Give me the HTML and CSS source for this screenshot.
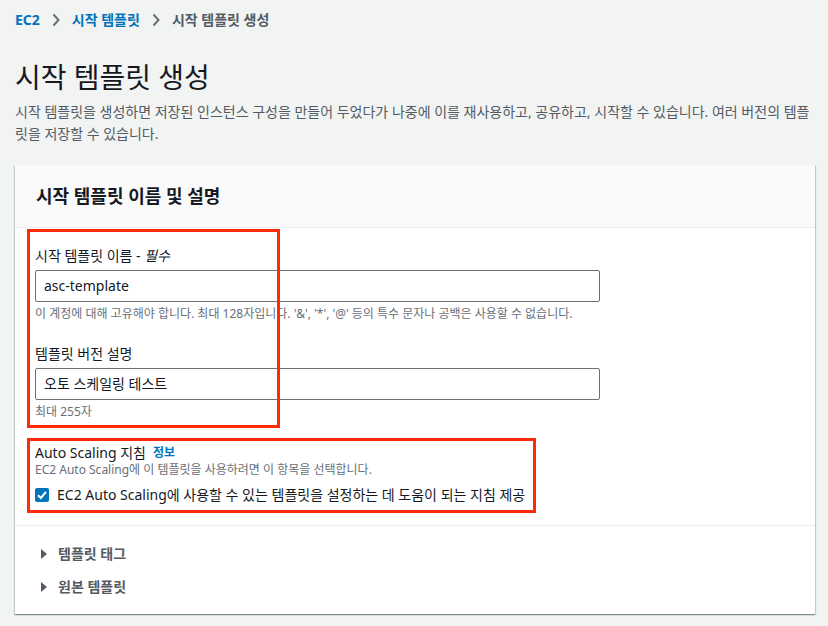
FILE: index.html
```html
<!DOCTYPE html>
<html lang="ko">
<head>
<meta charset="utf-8">
<link rel="stylesheet" href="styles.css">
</head>
<body>
<div class="page">
  <nav class="crumbs">
    <a class="crumb-link">EC2</a>
    <svg class="chev" width="8" height="14" viewBox="0 0 8 14"><path d="M1.5 1.5 L6.5 7 L1.5 12.5" fill="none" stroke="#687078" stroke-width="2"/></svg>
    <a class="crumb-link">시작 템플릿</a>
    <svg class="chev" width="8" height="14" viewBox="0 0 8 14"><path d="M1.5 1.5 L6.5 7 L1.5 12.5" fill="none" stroke="#687078" stroke-width="2"/></svg>
    <span class="crumb-current">시작 템플릿 생성</span>
  </nav>
  <h1 class="title">시작 템플릿 생성</h1>
  <p class="desc">시작 템플릿을 생성하면 저장된 인스턴스 구성을 만들어 두었다가 나중에 이를 재사용하고, 공유하고, 시작할 수 있습니다. 여러 버전의 템플릿을 저장할 수 있습니다.</p>

  <section class="card">
    <header class="card-head">시작 템플릿 이름 및 설명</header>
    <div class="card-body">
      <div class="field">
        <label class="label">시작 템플릿 이름 - <i>필수</i></label>
        <div class="input">asc-template</div>
        <div class="hint">이 계정에 대해 고유해야 합니다. 최대 128자입니다. '&amp;', '*', '@' 등의 특수 문자나 공백은 사용할 수 없습니다.</div>
      </div>
      <div class="field">
        <label class="label">템플릿 버전 설명</label>
        <div class="input">오토 스케일링 테스트</div>
        <div class="hint">최대 255자</div>
      </div>
      <div class="field asg">
        <div class="label-row"><span class="label">Auto Scaling 지침</span><a class="info">정보</a></div>
        <div class="hint small-desc">EC2 Auto Scaling에 이 템플릿을 사용하려면 이 항목을 선택합니다.</div>
        <div class="check-row">
          <span class="checkbox"><svg width="14" height="14" viewBox="0 0 14 14"><path d="M3 7.2 L5.8 10 L11 4" fill="none" stroke="#fff" stroke-width="2"/></svg></span>
          <span class="check-label">EC2 Auto Scaling에 사용할 수 있는 템플릿을 설정하는 데 도움이 되는 지침 제공</span>
        </div>
      </div>
      <div class="mark mark-1"></div>
      <div class="mark mark-2"></div>
    </div>
    <div class="card-foot">
      <div class="expander"><span class="tri"></span>템플릿 태그</div>
      <div class="expander"><span class="tri"></span>원본 템플릿</div>
    </div>
  </section>
</div>
</body>
</html>
```

FILE: styles.css
```css
* { box-sizing: border-box; }
html, body { margin: 0; padding: 0; }
body {
  background: #f2f3f3;
  font-family: "Noto Sans", "Noto Sans CJK KR", sans-serif;
  color: #16191f;
  width: 828px;
  height: 626px;
  overflow: hidden;
}
.page { padding: 10px 13px 0 15px; }
.crumbs {
  display: flex;
  align-items: center;
  font-size: 14px;
  line-height: 20px;
  height: 20px;
  font-weight: 700;
}
.crumb-link { color: #0073bb; }
.chev { margin: 0 12px 0 12px; }
.crumb-current { color: #545b64; }
.title {
  margin: 29px 0 0 0;
  font-size: 28px;
  line-height: 36px;
  font-weight: 400;
  color: #16191f;
}
.desc {
  margin: 6px 0 0 0;
  font-size: 14px;
  line-height: 22px;
  color: #545b64;
}
.card {
  margin-top: 20px;
  width: 800px;
  background: #fff;
  box-shadow: 0 1px 1px 0 rgba(0,28,36,.3), 1px 1px 1px 0 rgba(0,28,36,.15), -1px 1px 1px 0 rgba(0,28,36,.15);
}
.card-head {
  background: #fafafa;
  border-bottom: 1px solid #eaeded;
  padding: 16px 20px 16px 21px;
  font-size: 18px;
  line-height: 30px;
  font-weight: 700;
}
.card-body {
  position: relative;
  padding: 18px 20px 20px 20px;
  border-bottom: 1px solid #eaeded;
  display: flex;
  flex-direction: column;
  gap: 22px;
}
.field { display: flex; flex-direction: column; }
.label { font-size: 14px; line-height: 20px; color: #16191f; }
.label i { font-style: italic; }
.input {
  margin-top: 4px;
  width: 565px;
  height: 32px;
  border: 1px solid #687078;
  border-radius: 2px;
  padding: 0 8px;
  font-size: 14px;
  line-height: 30px;
  color: #16191f;
}
.hint {
  margin-top: 4px;
  font-size: 12px;
  line-height: 16px;
  color: #687078;
}
.asg { gap: 0; margin-top: 2px; }
.label-row { display: flex; align-items: center; gap: 7px; line-height: 18px; }
.label-row .label { line-height: 18px; }
.info { color: #0073bb; font-weight: 700; font-size: 12px; line-height: 18px; }
.small-desc { margin-top: 0; }
.check-row {
  margin-top: 7px;
  display: flex;
  align-items: center;
  gap: 8px;
  height: 20px;
}
.checkbox {
  width: 14px;
  height: 14px;
  background: #0073bb;
  border-radius: 2px;
  display: flex;
}
.check-label { font-size: 14px; line-height: 20px; }
.mark {
  position: absolute;
  border: 3px solid #ff2a0c;
  pointer-events: none;
}
.mark-1 { left: 12px; top: 1px; width: 253px; height: 199px; }
.mark-2 { left: 12px; top: 210px; width: 509px; height: 75px; }
.card-foot {
  padding: 17px 20px 16px 26px;
  display: flex;
  flex-direction: column;
  gap: 11px;
}
.expander {
  display: flex;
  align-items: center;
  font-size: 14px;
  line-height: 22px;
  font-weight: 700;
  color: #545b64;
}
.tri {
  width: 0;
  height: 0;
  border-top: 5px solid transparent;
  border-bottom: 5px solid transparent;
  border-left: 6px solid #545b64;
  margin-right: 11px;
}
```
